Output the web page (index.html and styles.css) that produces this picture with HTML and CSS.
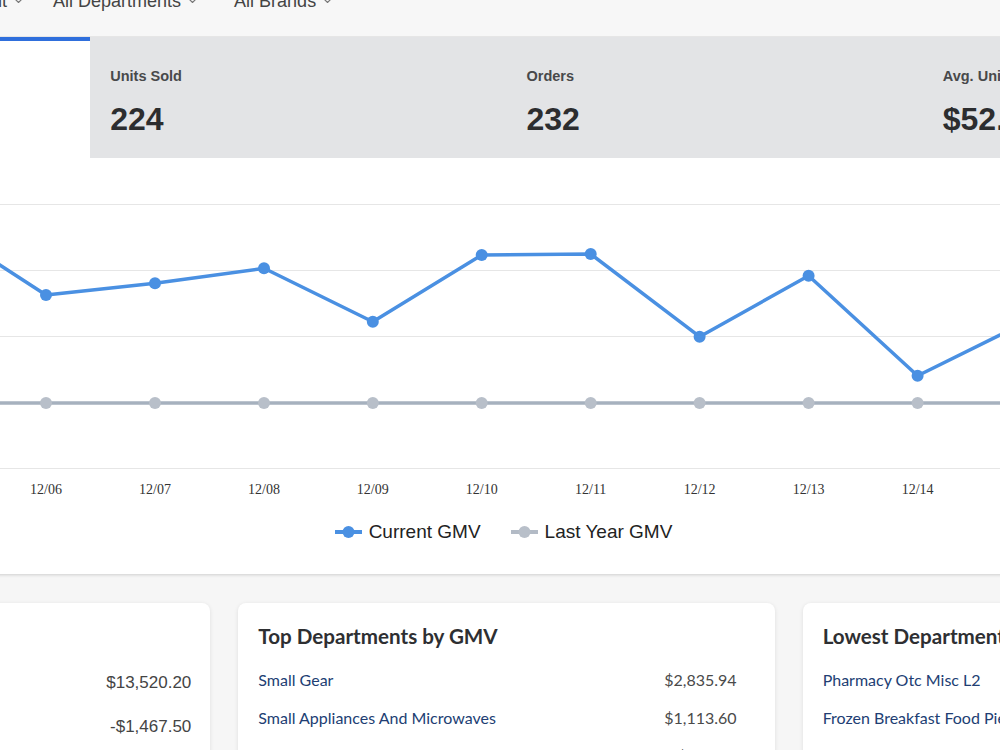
FILE: index.html
```html
<!DOCTYPE html>
<html lang="en">
<head>
<meta charset="utf-8">
<title>Sales Overview</title>
<link rel="stylesheet" href="styles.css">
</head>
<body>
<div class="page">
  <header class="filters">
    <div class="filter filter-fulfillment">All Fulfillment <svg class="caret" width="7" height="4" viewBox="0 0 7 4"><polyline points="0.5,0.5 3.5,3.5 6.5,0.5"/></svg></div>
    <div class="filter">All Departments <svg class="caret" width="7" height="4" viewBox="0 0 7 4"><polyline points="0.5,0.5 3.5,3.5 6.5,0.5"/></svg></div>
    <div class="filter">All Brands <svg class="caret" width="7" height="4" viewBox="0 0 7 4"><polyline points="0.5,0.5 3.5,3.5 6.5,0.5"/></svg></div>
  </header>

  <section class="metrics">
    <div class="metric active">
      <div class="metric-label">GMV</div>
      <div class="metric-value">$11,773.44</div>
    </div>
    <div class="metric">
      <div class="metric-label">Units Sold</div>
      <div class="metric-value">224</div>
    </div>
    <div class="metric">
      <div class="metric-label">Orders</div>
      <div class="metric-value">232</div>
    </div>
    <div class="metric">
      <div class="metric-label">Avg. Unit Price</div>
      <div class="metric-value">$52.56</div>
    </div>
  </section>

  <section class="chart-card">
    <svg class="chart" width="1665" height="346" viewBox="0 0 1665 346">
      <g transform="translate(326,-158)">
        <g class="grid">
          <line x1="-270" y1="204.5" x2="1320" y2="204.5"/>
          <line x1="-270" y1="270.5" x2="1320" y2="270.5"/>
          <line x1="-270" y1="336.5" x2="1320" y2="336.5"/>
          <line x1="-270" y1="402.5" x2="1320" y2="402.5"/>
          <line x1="-270" y1="468.5" x2="1320" y2="468.5"/>
        </g>
        <g class="series last-year">
          <polyline points="-280.9,403 -171.9,403 -63,403 46,403 155,403 264,403 372.8,403 481.7,403 590.7,403 699.6,403 808.6,403 917.6,403 1026.6,403 1135.5,403 1244.5,403"/>
          <circle cx="-280.9" cy="403" r="6"/><circle cx="-171.9" cy="403" r="6"/><circle cx="-63" cy="403" r="6"/>
          <circle cx="46" cy="403" r="6"/><circle cx="155" cy="403" r="6"/><circle cx="264" cy="403" r="6"/>
          <circle cx="372.8" cy="403" r="6"/><circle cx="481.7" cy="403" r="6"/><circle cx="590.7" cy="403" r="6"/>
          <circle cx="699.6" cy="403" r="6"/><circle cx="808.6" cy="403" r="6"/><circle cx="917.6" cy="403" r="6"/>
          <circle cx="1026.6" cy="403" r="6"/><circle cx="1135.5" cy="403" r="6"/><circle cx="1244.5" cy="403" r="6"/>
        </g>
        <g class="series current">
          <polyline points="-280.9,300 -171.9,262 -63,224 46,295 155,283.3 264,268.3 372.8,321.7 481.7,255 590.7,254 699.6,336.7 808.6,275.7 917.6,375.7 1026.6,321.8 1135.5,290 1244.5,310"/>
          <circle cx="-280.9" cy="300" r="6"/><circle cx="-171.9" cy="262" r="6"/><circle cx="-63" cy="224" r="6"/>
          <circle cx="46" cy="295" r="6"/><circle cx="155" cy="283.3" r="6"/><circle cx="264" cy="268.3" r="6"/>
          <circle cx="372.8" cy="321.7" r="6"/><circle cx="481.7" cy="255" r="6"/><circle cx="590.7" cy="254" r="6"/>
          <circle cx="699.6" cy="336.7" r="6"/><circle cx="808.6" cy="275.7" r="6"/><circle cx="917.6" cy="375.7" r="6"/>
          <circle cx="1026.6" cy="321.8" r="6"/><circle cx="1135.5" cy="290" r="6"/><circle cx="1244.5" cy="310" r="6"/>
        </g>
        <g class="x-labels">
          <text x="-280.9" y="493.5">12/03</text>
          <text x="-171.9" y="493.5">12/04</text>
          <text x="-63" y="493.5">12/05</text>
          <text x="46" y="493.5">12/06</text>
          <text x="155" y="493.5">12/07</text>
          <text x="264" y="493.5">12/08</text>
          <text x="372.8" y="493.5">12/09</text>
          <text x="481.7" y="493.5">12/10</text>
          <text x="590.7" y="493.5">12/11</text>
          <text x="699.6" y="493.5">12/12</text>
          <text x="808.6" y="493.5">12/13</text>
          <text x="917.6" y="493.5">12/14</text>
          <text x="1026.6" y="493.5">12/15</text>
          <text x="1135.5" y="493.5">12/16</text>
          <text x="1244.5" y="493.5">12/17</text>
        </g>
      </g>
    </svg>
    <div class="legend">
      <div class="legend-item">
        <svg class="legend-key current" width="27" height="14" viewBox="0 0 27 14"><line x1="0" y1="7" x2="27" y2="7"/><circle cx="13.5" cy="7" r="6"/></svg>
        <span>Current GMV</span>
      </div>
      <div class="legend-item">
        <svg class="legend-key last-year" width="27" height="14" viewBox="0 0 27 14"><line x1="0" y1="7" x2="27" y2="7"/><circle cx="13.5" cy="7" r="6"/></svg>
        <span>Last Year GMV</span>
      </div>
    </div>
  </section>

  <section class="cards">
    <article class="card">
      <h2 class="card-title">GMV Breakdown</h2>
      <ul class="summary-list">
        <li class="summary-row"><span>Gross Sales</span><span>$13,520.20</span></li>
        <li class="summary-row"><span>Refunds</span><span>-$1,467.50</span></li>
        <li class="summary-row"><span>Net Sales</span><span>$12,052.70</span></li>
      </ul>
    </article>
    <article class="card">
      <h2 class="card-title">Top Departments by GMV</h2>
      <ul class="dept-list">
        <li class="dept-row"><a href="#">Small Gear</a><span class="amount">$2,835.94</span></li>
        <li class="dept-row"><a href="#">Small Appliances And Microwaves</a><span class="amount">$1,113.60</span></li>
        <li class="dept-row"><a href="#">Countertop Appliances</a><span class="amount">$415.84</span></li>
      </ul>
    </article>
    <article class="card">
      <h2 class="card-title">Lowest Departments by GMV</h2>
      <ul class="dept-list">
        <li class="dept-row"><a href="#">Pharmacy Otc Misc L2</a><span class="amount">$4.97</span></li>
        <li class="dept-row"><a href="#">Frozen Breakfast Food Pies</a><span class="amount">$6.48</span></li>
        <li class="dept-row"><a href="#">Home Storage</a><span class="amount">$8.99</span></li>
      </ul>
    </article>
  </section>
</div>
</body>
</html>
```

FILE: styles.css
```css
html, body {
  margin: 0;
}

body {
  background: #f6f6f6;
  overflow: hidden;
  font-family: "Liberation Sans", Arial, sans-serif;
}

.page {
  width: 1665px;
  margin-left: -326px;
}

/* filter bar */
.filters {
  display: flex;
  align-items: flex-start;
  height: 44px;
  margin-top: -8px;
  padding-left: 226px;
  background: #f7f7f7;
  border-bottom: 1px solid #e6e6e6;
}

.filter {
  display: flex;
  align-items: center;
  gap: 8px;
  margin-right: 38px;
  height: 18px;
  font-size: 18px;
  line-height: 18px;
  color: #444;
  white-space: nowrap;
}

.filter-fulfillment {
  margin-right: 31px;
}

.caret polyline {
  fill: none;
  stroke: #777;
  stroke-width: 1.2;
}

/* metric tabs */
.metrics {
  display: grid;
  grid-template-columns: repeat(4, 1fr);
}

.metric {
  background: #e3e4e6;
  border-top: 4px solid transparent;
  padding: 26.5px 20px 20px;
}

.metric.active {
  background: #fff;
  border-top-color: #2f6fdc;
}

.metric-label {
  font-size: 14.5px;
  line-height: 17px;
  font-weight: 700;
  color: #48494b;
}

.metric-value {
  margin-top: 15.5px;
  font-size: 32px;
  line-height: 38px;
  font-weight: 700;
  color: #2c2d2f;
}

/* chart */
.chart-card {
  background: #fff;
  box-shadow: 0 1px 3px rgba(0, 0, 0, 0.16);
  padding-bottom: 14px;
}

.chart {
  display: block;
}

.grid line {
  stroke: #e6e6e6;
  stroke-width: 1;
}

.series polyline {
  fill: none;
  stroke-width: 3.5;
  stroke-linejoin: round;
}

.series.current polyline {
  stroke: #4a90e2;
}

.series.current circle {
  fill: #4a90e2;
}

.series.last-year polyline {
  stroke: #a6b1be;
}

.series.last-year circle {
  fill: #b8bfc9;
}

.x-labels text {
  font-family: "Liberation Serif", "Times New Roman", serif;
  font-size: 14px;
  fill: #333;
  text-anchor: middle;
}

.legend {
  display: flex;
  justify-content: center;
  align-items: center;
  gap: 30px;
  height: 56px;
  padding-right: 6px;
  font-size: 19px;
  line-height: 22px;
  color: #222;
}

.legend-item {
  display: flex;
  align-items: center;
  gap: 7px;
}

.legend-key line {
  stroke-width: 4;
}

.legend-key.current line {
  stroke: #4a90e2;
}

.legend-key.current circle {
  fill: #4a90e2;
}

.legend-key.last-year line {
  stroke: #b3bbc6;
}

.legend-key.last-year circle {
  fill: #b8bfc9;
}

/* department cards */
.cards {
  display: grid;
  grid-template-columns: repeat(3, 1fr);
  gap: 28px;
  margin-top: 29px;
}

.card {
  background: #fff;
  border-radius: 8px;
  box-shadow: 0 1px 4px rgba(0, 0, 0, 0.1);
  padding: 20px;
  min-height: 300px;
}

.card-title {
  margin: 0;
  font-family: Lato, "Liberation Sans", sans-serif;
  font-size: 20.6px;
  line-height: 26px;
  font-weight: 700;
  color: #2e2f32;
}

.summary-list,
.dept-list {
  list-style: none;
  padding: 0;
  margin: 12px 0 0;
}

.summary-list {
  margin-right: -1px;
}

.summary-row {
  display: flex;
  justify-content: space-between;
  padding: 12px 0;
  font-size: 17px;
  line-height: 20px;
  color: #444;
}

.dept-list {
  margin-right: 18px;
}

.dept-row {
  display: flex;
  justify-content: space-between;
  padding: 8px 0;
  font-family: Lato, "Liberation Sans", sans-serif;
  font-size: 16px;
  line-height: 22px;
}

.dept-row a {
  color: #213e73;
  text-decoration: none;
}

.dept-row .amount {
  color: #4a4a4a;
}
```
